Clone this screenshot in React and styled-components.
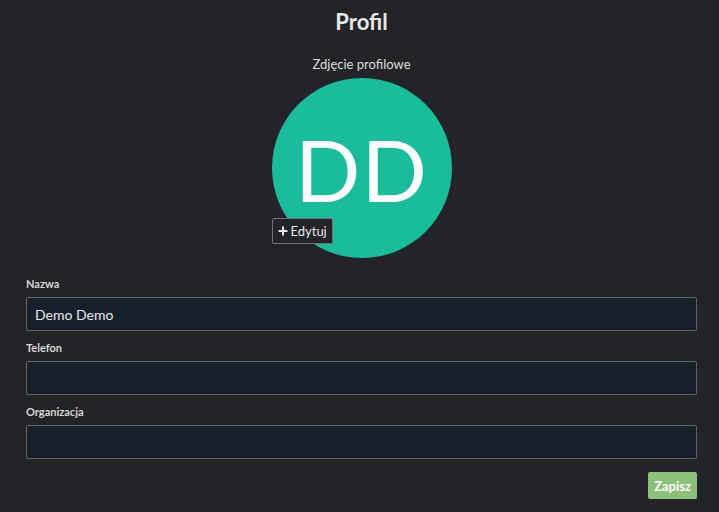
import React from 'react'
import styled, { createGlobalStyle } from 'styled-components'

const GlobalStyle = createGlobalStyle`
  html, body {
    margin: 0;
    background: #222428;
    font-family: Lato, "Open Sans", sans-serif;
    color: #e4e4e4;
  }
`

const Page = styled.div`
  width: 719px;
  height: 512px;
  box-sizing: border-box;
  padding: 0 22px 0 26px;
  display: flex;
  flex-direction: column;
`

const Title = styled.h1`
  margin: 10px 0 0;
  font-size: 22px;
  line-height: 24px;
  font-weight: 700;
  text-align: center;
  color: #e8e8e8;
`

const PhotoLabel = styled.div`
  margin-top: 22px;
  font-size: 13px;
  line-height: 16px;
  text-align: center;
  color: #dcdcdc;
`

const AvatarWrap = styled.div`
  position: relative;
  width: 180px;
  height: 180px;
  margin: 6px auto 0;
`

const Avatar = styled.div`
  width: 180px;
  height: 180px;
  border-radius: 50%;
  background: #1abc9c;
  color: #fff;
  display: flex;
  align-items: center;
  justify-content: center;
  font-size: 86px;
  font-weight: 400;
  letter-spacing: 1px;
`

const EditButton = styled.button`
  position: absolute;
  left: 0;
  top: 140px;
  height: 26px;
  padding: 0 5px;
  display: flex;
  align-items: center;
  gap: 3px;
  background: #222428;
  border: 1px solid #707278;
  border-radius: 2px;
  color: #e8e8e8;
  font-family: Lato, sans-serif;
  font-size: 13px;
`

const Form = styled.form`
  margin-top: 19px;
  display: flex;
  flex-direction: column;
`

const Label = styled.label`
  font-size: 11px;
  font-weight: 700;
  line-height: 14px;
  color: #d8d8d8;
  margin: ${({ first }) => (first ? '0' : '10px')} 0 6px;
`

const Input = styled.input`
  box-sizing: border-box;
  height: 34px;
  width: 100%;
  background: #18212b;
  border: 1px solid #5f6267;
  border-radius: 2px;
  padding: 0 8px;
  color: #e8e8e8;
  font-family: Lato, sans-serif;
  font-size: 14px;
  outline: none;
`

const Actions = styled.div`
  display: flex;
  justify-content: flex-end;
  margin-top: 13px;
`

const SaveButton = styled.button`
  height: 27px;
  padding: 0 6px;
  background: #8bc17b;
  border: none;
  border-radius: 2px;
  color: #fff;
  font-family: Lato, sans-serif;
  font-weight: 700;
  font-size: 13px;
`

const fields = [
  { label: 'Nazwa', value: 'Demo Demo' },
  { label: 'Telefon', value: '' },
  { label: 'Organizacja', value: '' }
]

export default function App () {
  return (
    <>
      <GlobalStyle />
      <Page>
        <Title>Profil</Title>
        <PhotoLabel>Zdjęcie profilowe</PhotoLabel>
        <AvatarWrap>
          <Avatar>DD</Avatar>
          <EditButton type='button'>
            <svg width='10' height='10' viewBox='0 0 10 10'>
              <path d='M5 0.5v9M0.5 5h9' stroke='#e8e8e8' strokeWidth='2' />
            </svg>
            Edytuj
          </EditButton>
        </AvatarWrap>
        <Form onSubmit={(e) => e.preventDefault()}>
          {fields.map((f, k) => (
            <React.Fragment key={k}>
              <Label first={k === 0}>{f.label}</Label>
              <Input defaultValue={f.value} />
            </React.Fragment>
          ))}
          <Actions>
            <SaveButton type='submit'>Zapisz</SaveButton>
          </Actions>
        </Form>
      </Page>
    </>
  )
}
